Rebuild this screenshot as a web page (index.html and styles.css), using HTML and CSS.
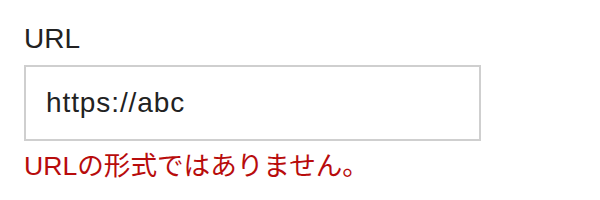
FILE: index.html
```html
<!DOCTYPE html>
<html lang="ja">

<head>
    <meta charset="UTF-8">
    <meta name="viewport" content="width=device-width, initial-scale=1.0">
    <title>URL</title>
    <link rel="stylesheet" href="styles.css">
</head>

<body>
    <div class="field">
        <label class="field-label" for="url">URL</label>
        <input class="field-input" id="url" type="text" value="https://abc">
        <p class="field-error">URLの形式ではありません。</p>
    </div>
</body>

</html>
```

FILE: styles.css
```css
* {
    box-sizing: border-box;
}

body {
    margin: 0;
    padding: 25px 24px;
    background-color: #fff;
    font-family: "Liberation Sans", "Noto Sans CJK JP", sans-serif;
    color: #222;
}

.field {
    display: flex;
    flex-direction: column;
    align-items: flex-start;
}

.field-label {
    font-size: 28px;
    line-height: 28px;
    margin-bottom: 12px;
}

.field-input {
    width: 457px;
    height: 76px;
    margin: 0;
    padding: 0 0 0 20px;
    border: 2px solid #cfcfcf;
    border-radius: 0;
    font-family: inherit;
    font-size: 28px;
    letter-spacing: 0.9px;
    color: #222;
    outline: none;
}

.field-error {
    margin: 10px 0 0;
    font-size: 26.6px;
    line-height: 30px;
    color: #b80c0c;
}
```
